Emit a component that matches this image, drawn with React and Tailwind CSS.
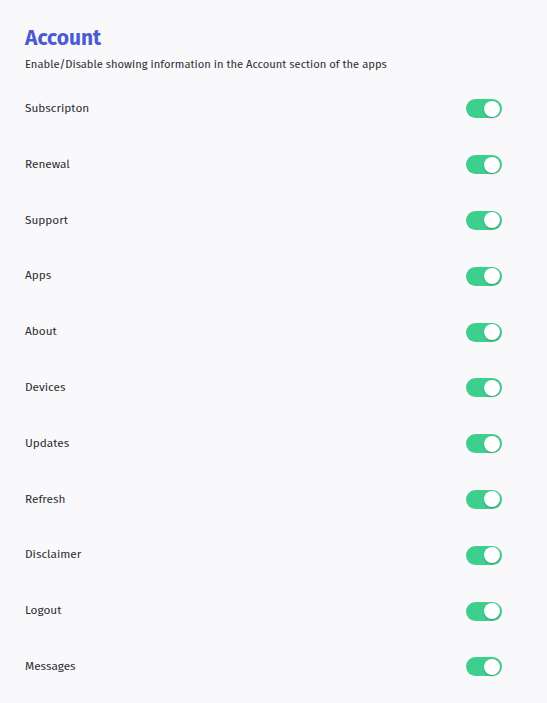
const items = ['Subscripton', 'Renewal', 'Support', 'Apps', 'About', 'Devices', 'Updates', 'Refresh', 'Disclaimer', 'Logout', 'Messages'];

function Toggle() {
  return (
    <div className="w-[36px] h-[19px] rounded-full bg-[#3ecf8e] flex items-center justify-end px-[2px]">
      <div className="w-[16px] h-[16px] rounded-full bg-white shadow-[0_1px_2px_rgba(0,0,0,0.25)]" />
    </div>
  );
}

export default function App() {
  return (
    <div className="w-[547px] h-[703px] bg-[#f9f9fb] px-[25px] pt-[26px] font-['Fira_Sans','Open_Sans',sans-serif] text-[#2d2d33]">
      <h1 className="text-[21px] leading-[24px] font-bold text-[#4c5bd4]">Account</h1>
      <p className="text-[11.2px] leading-[16px] mt-[7px]">Enable/Disable showing information in the Account section of the apps</p>
      <div className="flex flex-col mt-[8px]">
        {items.map((it) => (
          <div key={it} className="h-[55.8px] flex items-center justify-between pr-[20px]">
            <span className="text-[11.8px]">{it}</span>
            <Toggle />
          </div>
        ))}
      </div>
    </div>
  );
}
